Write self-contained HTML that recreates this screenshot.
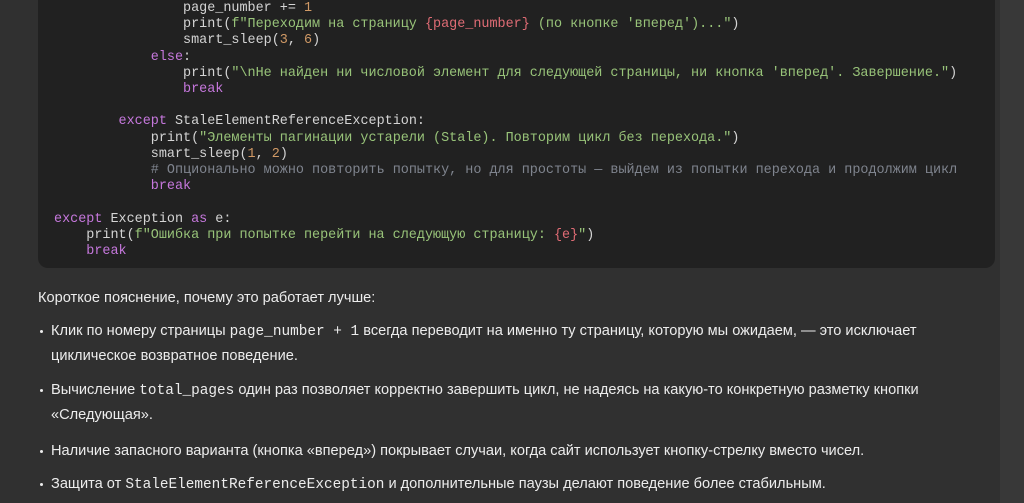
<!DOCTYPE html>
<html><head><meta charset="utf-8"><style>
body{margin:0;width:1024px;height:503px;background:#303030;overflow:hidden;position:relative;font-family:"Liberation Sans","Noto Sans CJK SC",sans-serif;color:#ececec}
.sb{position:absolute;right:0;top:0;width:24px;height:503px;background:#383838}
.code{position:absolute;left:38px;top:-20px;width:957px;height:288px;background:#212121;border-radius:0 0 10px 10px}
pre{position:absolute;left:54px;top:1px;margin:0;font-family:"Liberation Mono","Noto Sans CJK SC",monospace;font-size:13.45px;line-height:16.2px;color:#d4d4d4;white-space:pre}
.k{color:#c678dd}.s{color:#98c379}.n{color:#d19a66}.r{color:#e06c75}.c{color:#7f848e}
.t{position:absolute;left:38px;font-size:14.6px;line-height:24px}
.b{position:absolute;left:51px;font-size:14.6px;line-height:24px;width:935px}
.b::before{content:"";position:absolute;left:-11px;top:11px;width:3px;height:3px;border-radius:50%;background:#ececec}
code{font-family:"Liberation Mono",monospace;font-size:14.4px}
</style></head><body>
<div class="sb"></div>
<div class="code"></div>
<pre>                page_number += <span class="n">1</span>
                print(<span class="s">f"Переходим на страницу </span><span class="r">{page_number}</span><span class="s"> (по кнопке 'вперед')..."</span>)
                smart_sleep(<span class="n">3</span>, <span class="n">6</span>)
            <span class="k">else</span>:
                print(<span class="s">"\nНе найден ни числовой элемент для следующей страницы, ни кнопка 'вперед'. Завершение."</span>)
                <span class="k">break</span>

        <span class="k">except</span> StaleElementReferenceException:
            print(<span class="s">"Элементы пагинации устарели (Stale). Повторим цикл без перехода."</span>)
            smart_sleep(<span class="n">1</span>, <span class="n">2</span>)
            <span class="c"># Опционально можно повторить попытку, но для простоты — выйдем из попытки перехода и продолжим цикл</span>
            <span class="k">break</span>

<span class="k">except</span> Exception <span class="k">as</span> e:
    print(<span class="s">f"Ошибка при попытке перейти на следующую страницу: </span><span class="r">{e}</span><span class="s">"</span>)
    <span class="k">break</span></pre>
<div class="t" style="top:286px">Короткое пояснение, почему это работает лучше:</div>
<div class="b" style="top:319px">Клик по номеру страницы <code>page_number + 1</code> всегда переводит на именно ту страницу, которую мы ожидаем, — это исключает циклическое возвратное поведение.</div>
<div class="b" style="top:378px">Вычисление <code>total_pages</code> один раз позволяет корректно завершить цикл, не надеясь на какую-то конкретную разметку кнопки «Следующая».</div>
<div class="b" style="top:439px">Наличие запасного варианта (кнопка «вперед») покрывает случаи, когда сайт использует кнопку-стрелку вместо чисел.</div>
<div class="b" style="top:472px">Защита от <code>StaleElementReferenceException</code> и дополнительные паузы делают поведение более стабильным.</div>
</body></html>
